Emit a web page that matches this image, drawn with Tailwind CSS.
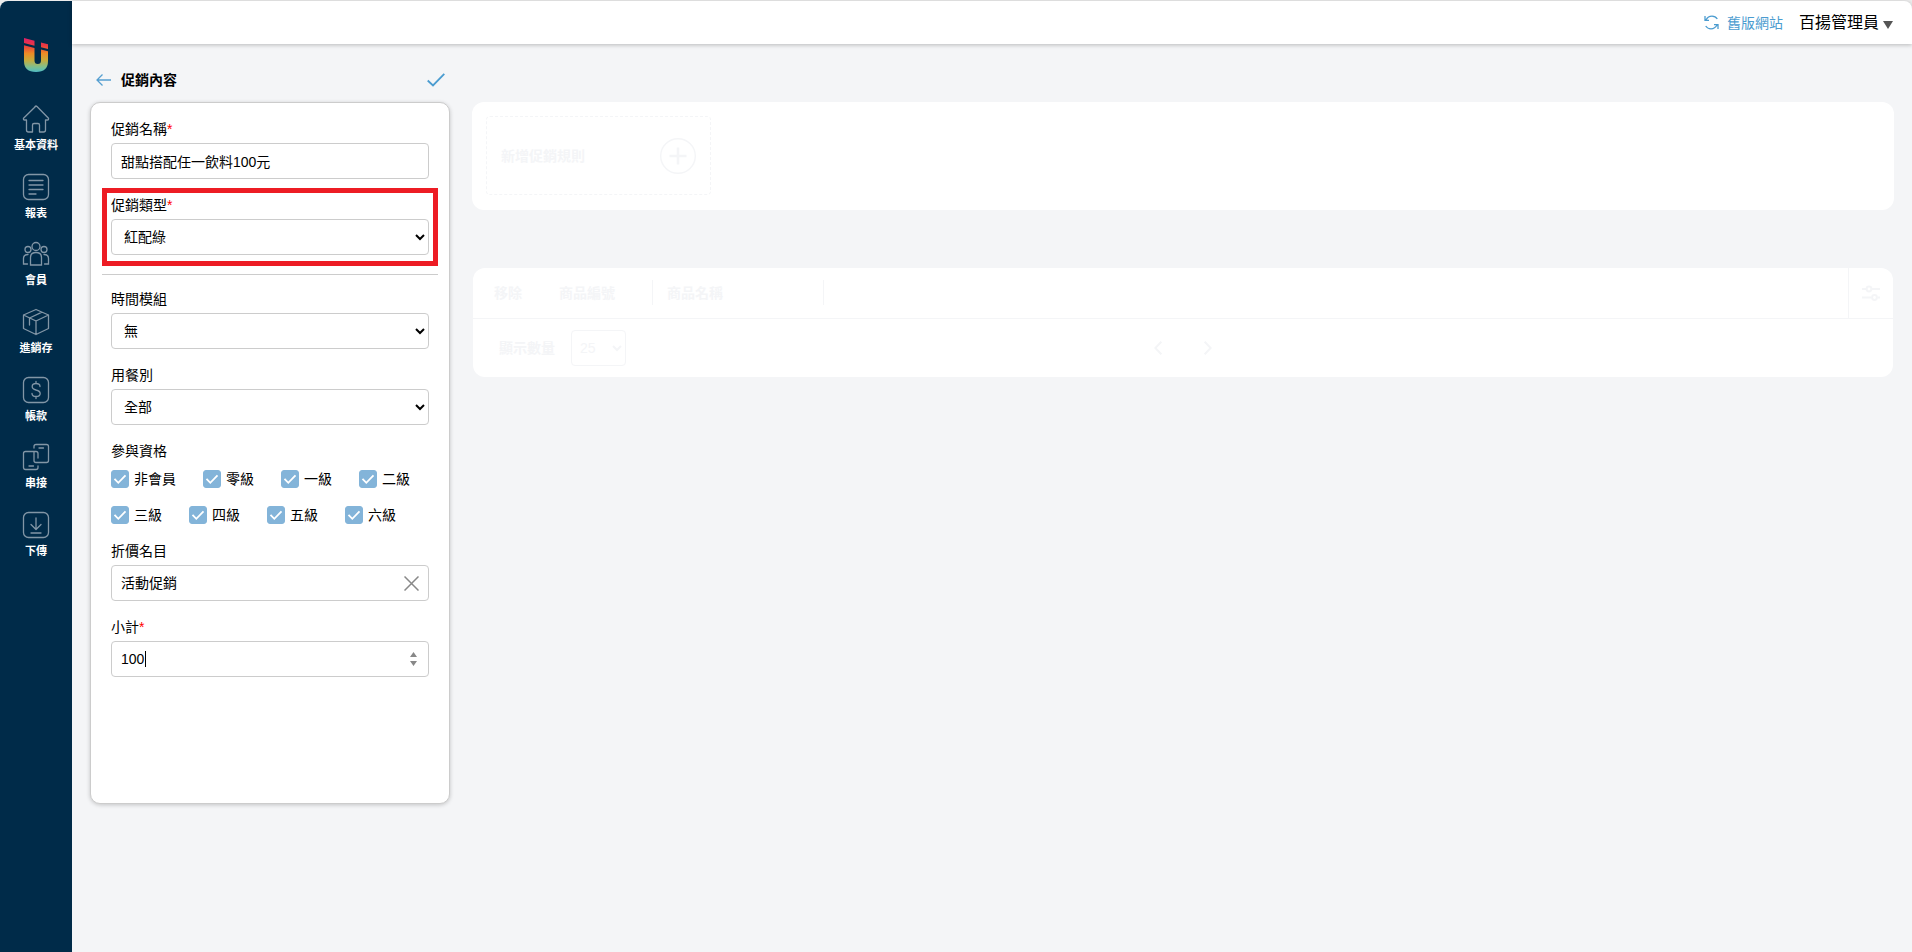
<!DOCTYPE html>
<html lang="zh-Hant">
<head>
    <meta charset="UTF-8">
    <meta name="viewport" content="width=device-width, initial-scale=1.0">
    <title>促銷內容</title>
    <script src="https://cdn.jsdelivr.net/npm/@tailwindcss/browser@4"></script>
</head>
<body class="bg-[#ececec] pt-px font-['Liberation_Sans','Noto_Sans_CJK_TC',sans-serif] text-sm text-black">
<div class="flex min-h-[calc(100vh-1px)] bg-[#f4f5f7] rounded-t-lg">

    <!-- Sidebar -->
    <aside class="w-[72px] shrink-0 bg-[#002b49] rounded-tl-lg flex flex-col items-center">
        <a href="#" aria-label="首頁" class="mt-[37px]">
            <svg class="w-6 h-[34px]" viewBox="0 0 24 34">
                <defs>
                    <linearGradient id="logo" x1="0" y1="0" x2="0" y2="1">
                        <stop offset="0" stop-color="#e0206a"/>
                        <stop offset=".22" stop-color="#ea3a40"/>
                        <stop offset=".45" stop-color="#ee8a25"/>
                        <stop offset=".65" stop-color="#c9ab3a"/>
                        <stop offset=".85" stop-color="#7fbf8e"/>
                        <stop offset="1" stop-color="#4fbcc4"/>
                    </linearGradient>
                </defs>
                <path fill="url(#logo)" d="M0 0L10.500 2.800V7.800L0 5zM17 4.500L24 6.300V11L17 9.200zM0 7.200L10.500 10V22.500Q10.500 26 13.800 26Q17 26 17 22.500V11.500L24 13.300V23Q24 34 12 34Q0 34 0 23z"/>
            </svg>
        </a>
        <nav class="mt-[33px] h-[454px] w-full flex flex-col justify-between text-[11px] leading-4 font-bold text-white">
            <a href="#" class="flex flex-col items-center gap-1">
                <svg class="w-7 h-7 text-[#8296a6]" viewBox="0 0 28 28" fill="none" stroke="currentColor" stroke-width="1.3" stroke-linejoin="round" stroke-linecap="round"><path d="M14 1L1.500 13.300Q1.200 15 2.500 15H4.500V25Q4.500 27 6.500 27H10.500V20Q10.500 18.500 12 18.500H16Q17.500 18.500 17.500 20V27H21.500Q23.500 27 23.500 25V15H25.500Q26.800 15 26.500 13.300L15 1.500Q14 .6 13 1.500"/></svg>
                基本資料
            </a>
            <a href="#" class="flex flex-col items-center gap-1">
                <svg class="w-7 h-7 text-[#8296a6]" viewBox="0 0 28 28" fill="none" stroke="currentColor" stroke-width="1.3" stroke-linecap="round"><rect x="1.500" y="1.500" width="25" height="25" rx="5"/><path d="M7 7.500H21M7 12H21M7 16.500H21M7 21H14"/></svg>
                報表
            </a>
            <a href="#" class="flex flex-col items-center gap-1">
                <svg class="w-7 h-7 text-[#8296a6]" viewBox="0 0 28 28" fill="none" stroke="currentColor" stroke-width="1.3" stroke-linecap="round"><circle cx="14" cy="6.500" r="4"/><circle cx="6" cy="9.500" r="3"/><circle cx="22" cy="9.500" r="3"/><path d="M8.500 25V17.500Q8.500 12.500 14 12.500Q19.500 12.500 19.500 17.500V25zM5.500 24H1.500V18.500Q1.500 14.500 6 14.500M22.500 24H26.500V18.500Q26.500 14.500 22 14.500"/></svg>
                會員
            </a>
            <a href="#" class="flex flex-col items-center gap-1">
                <svg class="w-7 h-7 text-[#8296a6]" viewBox="0 0 28 28" fill="none" stroke="currentColor" stroke-width="1.3" stroke-linejoin="round" stroke-linecap="round"><path d="M14 1.500L26.500 7V20.500L14 26.500L1.500 20.500V7zM1.500 7L14 13L26.500 7M14 13V26.500M20 4.200L7.500 10V17"/></svg>
                進銷存
            </a>
            <a href="#" class="flex flex-col items-center gap-1">
                <svg class="w-7 h-7 text-[#8296a6]" viewBox="0 0 28 28" fill="none" stroke="currentColor" stroke-width="1.3" stroke-linecap="round"><rect x="1.500" y="1.500" width="25" height="25" rx="5"/><path d="M14 5.500V7.500M14 20.500V22.500M18 10.500Q18 7.500 14 7.500Q10.200 7.500 10.200 10.500Q10.200 13 14 14Q18.200 15 18.200 17.500Q18.200 20.500 14 20.500Q10 20.500 10 17.500"/></svg>
                帳款
            </a>
            <a href="#" class="flex flex-col items-center gap-1">
                <svg class="w-7 h-7 text-[#8296a6]" viewBox="0 0 28 28" fill="none" stroke="currentColor" stroke-width="1.3" stroke-linecap="round"><path d="M12 5V3.500Q12 1.500 14 1.500H24.500Q26.500 1.500 26.500 3.500V17.500Q26.500 19.500 24.500 19.500H14Q12 19.500 12 17.500V9M16 23V24.500Q16 26.500 14 26.500H3.500Q1.500 26.500 1.500 24.500V10.500Q1.500 8.500 3.500 8.500H14Q16 8.500 16 10.500V15M17 5H21.500M7 23H11.500"/></svg>
                串接
            </a>
            <a href="#" class="flex flex-col items-center gap-1">
                <svg class="w-7 h-7 text-[#8296a6]" viewBox="0 0 28 28" fill="none" stroke="currentColor" stroke-width="1.3" stroke-linecap="round" stroke-linejoin="round"><rect x="1.500" y="1.500" width="25" height="25" rx="5"/><path d="M14 7V18M9 13.500L14 18.500L19 13.500M9 22H19"/></svg>
                下傳
            </a>
        </nav>
    </aside>

    <div class="flex-1 min-w-0 flex flex-col">
        <!-- Top bar -->
        <header class="h-[43px] bg-white rounded-tr-lg shadow-[0_1px_4px_rgba(0,0,0,0.25)] flex items-center justify-end gap-4 pr-[19px]">
            <a href="#" class="flex items-center gap-2 text-[#4b9cd0]">
                <svg class="w-[15px] h-[15px]" viewBox="0 0 15 15" fill="none" stroke="currentColor" stroke-width="1.300"><path d="M2 5Q4 1.200 8 1.200Q11.500 1.200 13.300 4M1 1V5.300H5M13 10Q11 13.800 7 13.800Q3.500 13.800 1.700 11M14 14V9.700H10"/></svg>
                舊版網站
            </a>
            <button type="button" class="flex items-center gap-1 text-base">
                百揚管理員
                <svg class="w-2.5 h-2 mt-1" viewBox="0 0 10 8"><path fill="#555" d="M0 0H10L5 8z"/></svg>
            </button>
        </header>

        <main class="flex-1 flex gap-[22px] px-[18px] pt-[22px]">
            <!-- Promotion form -->
            <section class="w-[360px] shrink-0">
                <div class="h-7 flex items-center pl-1.5 pr-[5px]">
                    <button type="button" aria-label="返回" class="mr-2.5">
                        <svg class="w-[15px] h-3" viewBox="0 0 15 12" fill="none" stroke="#559fd1" stroke-width="1.300"><path d="M.8 6H15M6.500 .5L1 6L6.500 11.500"/></svg>
                    </button>
                    <h1 class="font-bold">促銷內容</h1>
                    <button type="button" aria-label="儲存" class="ml-auto">
                        <svg class="w-[18px] h-[14px]" viewBox="0 0 18 14" fill="none" stroke="#4b9cd0" stroke-width="1.800"><path d="M.7 7.500L6 12.500L17.300 .8"/></svg>
                    </button>
                </div>

                <form class="mt-2 min-h-[702px] bg-white border border-[#ccc] rounded-[10px] shadow-[0_1px_4px_rgba(0,0,0,0.2)] px-5 pt-4 leading-5">
                    <div class="flex flex-col gap-1">
                        <label for="name">促銷名稱<span class="text-[#f00]">*</span></label>
                        <input id="name" type="text" value="甜點搭配任一飲料100元" class="h-9 w-full border border-[#ccc] rounded px-[9px]">
                    </div>

                    <div class="-mx-[9px] mt-[9px] border-5 border-[#ed1c24] px-1 pt-0.5 pb-1.5">
                        <div class="flex flex-col gap-1">
                            <label for="type">促銷類型<span class="text-[#f00]">*</span></label>
                            <select id="type" class="h-9 w-full border border-[#ccc] rounded px-2">
                                <option>紅配綠</option>
                            </select>
                        </div>
                    </div>

                    <hr class="-mx-[9px] mt-2 mb-3.5 border-[#ccc]">

                    <div class="flex flex-col gap-1">
                        <label for="time">時間模組</label>
                        <select id="time" class="h-9 w-full border border-[#ccc] rounded px-2">
                            <option>無</option>
                        </select>
                    </div>

                    <div class="mt-4 flex flex-col gap-1">
                        <label for="meal">用餐別</label>
                        <select id="meal" class="h-9 w-full border border-[#ccc] rounded px-2">
                            <option>全部</option>
                        </select>
                    </div>

                    <fieldset class="mt-4">
                        <legend>參與資格</legend>
                        <!-- filled from the levels list below -->
                        <div id="levels" class="mt-2 flex flex-wrap gap-x-[27px] gap-y-4"></div>
                    </fieldset>

                    <div class="mt-4 flex flex-col gap-1">
                        <label for="item">折價名目</label>
                        <div class="h-9 flex items-center border border-[#ccc] rounded px-[9px]">
                            <input id="item" type="text" value="活動促銷" class="flex-1 min-w-0 outline-none">
                            <button type="button" aria-label="清除">
                                <svg class="w-[15px] h-[15px]" viewBox="0 0 15 15" fill="none" stroke="#888" stroke-width="1.500"><path d="M.5 .5L14.500 14.500M14.500 .5L.5 14.500"/></svg>
                            </button>
                        </div>
                    </div>

                    <div class="mt-4 flex flex-col gap-1">
                        <label for="subtotal">小計<span class="text-[#f00]">*</span></label>
                        <div class="relative">
                            <input id="subtotal" type="number" value="100" class="h-9 w-full border border-[#ccc] rounded px-[9px] outline-none [&::-webkit-inner-spin-button]:opacity-0">
                            <span class="absolute left-[34px] top-2.5 w-px h-4 bg-black"></span>
                            <svg class="absolute right-3 top-[11px] w-[7px] h-3.5 pointer-events-none" viewBox="0 0 7 14"><path fill="#888" d="M0 5L3.500 0L7 5zM0 9H7L3.500 14z"/></svg>
                        </div>
                    </div>
                </form>
            </section>

            <!-- Rules and products, faded until the promotion is saved -->
            <section class="flex-1 min-w-0 pt-9 text-[#f4f5f7]">
                <div class="h-[108px] bg-white rounded-xl p-3.5">
                    <button type="button" class="w-[225px] h-[79px] border border-dashed border-[#f4f5f7] rounded flex items-center justify-between px-3.5 font-bold">
                        新增促銷規則
                        <svg class="w-9 h-9" viewBox="0 0 36 36" fill="none" stroke="currentColor"><circle cx="18" cy="18" r="17.300" stroke-width="1.400"/><path stroke-width="2.600" d="M18 9.500V26.500M9.500 18H26.500"/></svg>
                    </button>
                </div>

                <div class="mt-[58px] mx-px bg-white rounded-xl">
                    <table class="w-full table-fixed text-left">
                        <thead>
                            <tr class="h-[50px] border-b border-[#f4f5f7]">
                                <th class="w-[65px] pl-[21px]">移除</th>
                                <th class="w-[115px]"><div class="h-[25px] flex items-center pl-[21px] border-r border-[#f4f5f7]">商品編號</div></th>
                                <th class="w-[171px]"><div class="h-[25px] flex items-center pl-3.5 border-r border-[#f4f5f7]">商品名稱</div></th>
                                <th></th>
                                <th class="w-[45px] border-l border-[#f4f5f7]">
                                    <button type="button" aria-label="欄位設定" class="block mx-auto">
                                        <svg class="w-[18px] h-4" viewBox="0 0 18 16" fill="none" stroke="currentColor" stroke-width="2"><path d="M0 4H4M10 4H18M0 12.500H9.500M15.500 12.500H18"/><circle cx="7" cy="4" r="2.400"/><circle cx="12.500" cy="12.500" r="2.400"/></svg>
                                    </button>
                                </th>
                            </tr>
                        </thead>
                    </table>
                    <div class="h-[58px] grid grid-cols-[1fr_auto_1fr] items-center">
                        <div class="flex items-center gap-4 pl-[26px]">
                            <label for="size" class="font-bold">顯示數量</label>
                            <select id="size" class="w-[55px] h-9 border border-[#f4f5f7] rounded pl-1">
                                <option>25</option>
                            </select>
                        </div>
                        <div class="flex gap-[42px]">
                            <button type="button" aria-label="上一頁"><svg class="w-2 h-3.5" viewBox="0 0 8 14" fill="none" stroke="currentColor" stroke-width="2"><path d="M7.300 .7L1.300 7L7.300 13.300"/></svg></button>
                            <button type="button" aria-label="下一頁"><svg class="w-2 h-3.5" viewBox="0 0 8 14" fill="none" stroke="currentColor" stroke-width="2"><path d="M.7 .7L6.700 7L.7 13.300"/></svg></button>
                        </div>
                    </div>
                </div>
            </section>
        </main>
    </div>
</div>

<script>
    const levels = ["非會員", "零級", "一級", "二級", "三級", "四級", "五級", "六級"];
    document.getElementById('levels').innerHTML = levels.map(level => `
        <label class="flex items-center gap-[5px]">
            <span class="grid">
                <input type="checkbox" checked class="peer col-start-1 row-start-1 appearance-none w-[18px] h-[18px] rounded-[3px] border border-[#83b4d9] checked:bg-[#83b4d9]">
                <svg class="hidden peer-checked:block col-start-1 row-start-1 w-[18px] h-[18px] pointer-events-none" viewBox="0 0 18 18" fill="none" stroke="#fff" stroke-width="1.800"><path d="M3.500 8.800L7.300 12.800L14.500 5.300"/></svg>
            </span>
            ${level}
        </label>`).join('');
</script>
</body>
</html>
